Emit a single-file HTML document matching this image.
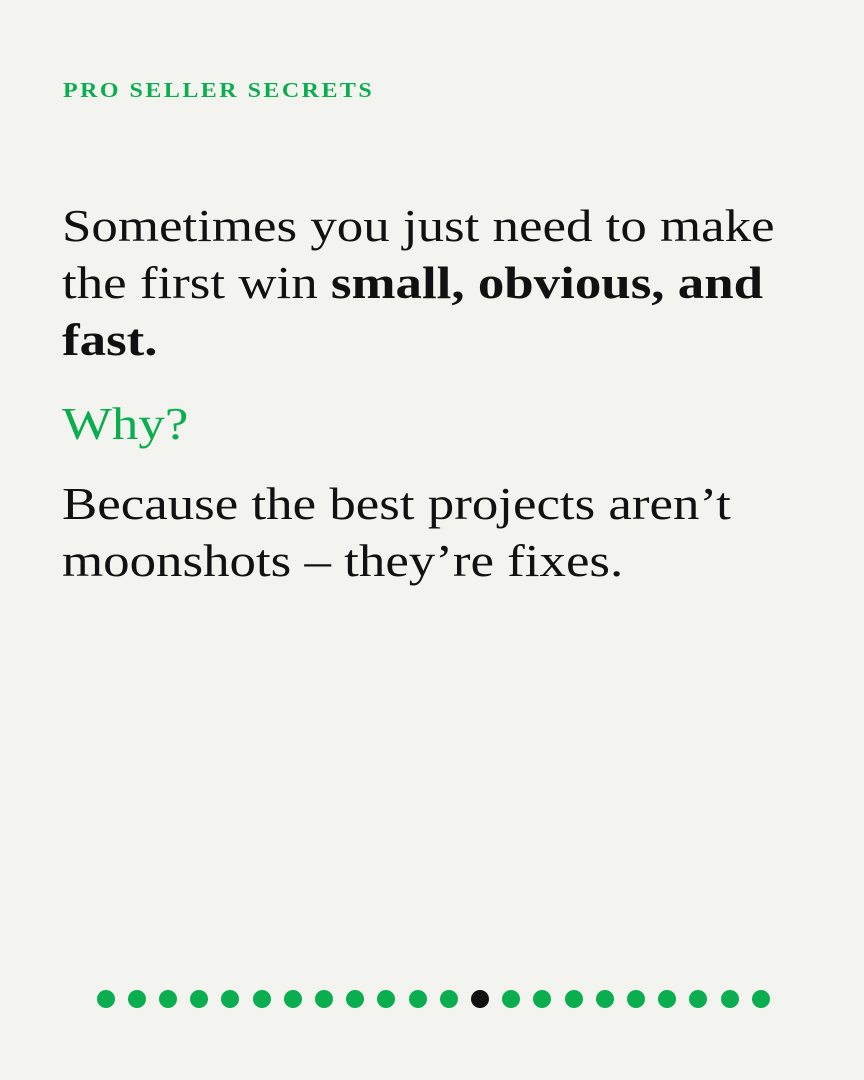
<!DOCTYPE html>
<html><head><meta charset="utf-8"><style>
body{margin:0;width:864px;height:1080px;background:#f3f4ef;position:relative;overflow:hidden;font-family:"Liberation Serif",serif;color:#111}
.k{position:absolute;left:63px;top:78px;font-size:21px;font-weight:bold;letter-spacing:2.2px;color:#0aae4f;transform:scaleX(1.14);transform-origin:left}
.t{position:absolute;left:62px;font-size:46px;line-height:57px;margin:0;white-space:nowrap;transform:scaleX(1.15);transform-origin:left}
.g{color:#0aae4f}
.d{position:absolute;top:990px;width:18px;height:18px;border-radius:50%;background:#0aae4f}
</style></head><body>
<div class="k">PRO SELLER SECRETS</div>
<div class="t" style="top:197px">Sometimes you just need to make<br>the first win <b>small, obvious, and</b><br><b>fast.</b></div>
<div class="t g" style="top:395px">Why?</div>
<div class="t" style="top:475px">Because the best projects aren’t<br>moonshots – they’re fixes.</div>
<script>
for(let i=0;i<22;i++){const d=document.createElement('div');d.className='d';d.style.left=(96.5+i*31.2)+'px';if(i==12)d.style.background='#111';document.body.appendChild(d);}
</script>
</body></html>
